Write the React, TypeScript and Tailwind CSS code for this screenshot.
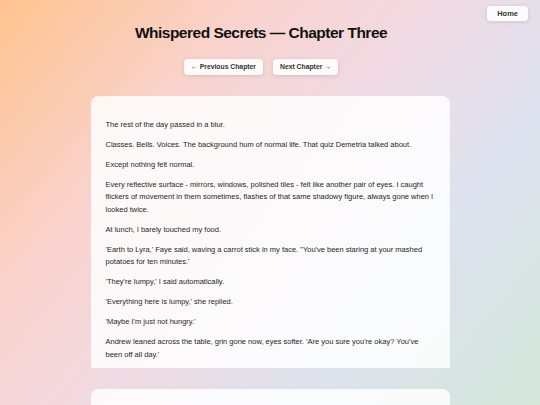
import React from "react";

const paragraphs = [
  "The rest of the day passed in a blur.",
  "Classes. Bells. Voices. The background hum of normal life. That quiz Demetria talked about.",
  "Except nothing felt normal.",
  "Every reflective surface - mirrors, windows, polished tiles - felt like another pair of eyes. I caught flickers of movement in them sometimes, flashes of that same shadowy figure, always gone when I looked twice.",
  "At lunch, I barely touched my food.",
  "'Earth to Lyra,' Faye said, waving a carrot stick in my face. \"You've been staring at your mashed potatoes for ten minutes.'",
  "'They're lumpy,' I said automatically.",
  "'Everything here is lumpy,' she replied.",
  "'Maybe I'm just not hungry.'",
  "Andrew leaned across the table, grin gone now, eyes softer. 'Are you sure you're okay? You've been off all day.'",
];

export default function App() {
  return (
    <div
      className="relative h-[405px] w-full overflow-hidden bg-[linear-gradient(130deg,#fec48f_0%,#f9d3cf_30%,#f0dae3_50%,#dde2ee_72%,#d4e6da_100%)] text-[#1f1f1f]"
      style={{ fontFamily: '"Liberation Sans", Arial, sans-serif' }}
    >
      <button className="absolute right-[12px] top-[6px] h-[15px] rounded-[4px] bg-white/90 px-[10px] text-[7.5px] font-bold text-[#333] shadow-[0_1px_4px_rgba(0,0,0,0.12)]">
        Home
      </button>

      <div className="flex flex-col items-center">
        <div className="flex flex-col items-center pr-[18px]">
          <h1 className="mt-[23px] text-[15.5px] font-bold leading-[20px] tracking-[-0.5px] text-[#111]">
            Whispered Secrets — Chapter Three
          </h1>

          <div className="mt-[16px] flex gap-[10px]">
            <button className="h-[16px] w-[79px] rounded-[4px] bg-white/90 text-[6.8px] font-bold text-[#333] shadow-[0_1px_4px_rgba(0,0,0,0.12)]">
              ← Previous Chapter
            </button>
            <button className="h-[16px] w-[65px] rounded-[4px] bg-white/90 text-[6.8px] font-bold text-[#333] shadow-[0_1px_4px_rgba(0,0,0,0.12)]">
              Next Chapter →
            </button>
          </div>
        </div>

        <div className="mt-[21px] flex w-[359px] flex-col gap-[21px]">
          <div className="h-[272px] overflow-hidden rounded-t-[8px] bg-white/85 px-[15px] pt-[23px]">
            {paragraphs.map((p, i) => (
              <p key={i} className="mb-[7.6px] text-[7.5px] leading-[12.4px]">
                {p}
              </p>
            ))}
          </div>
          <div className="h-[40px] rounded-t-[8px] bg-white/85" />
        </div>
      </div>
    </div>
  );
}
